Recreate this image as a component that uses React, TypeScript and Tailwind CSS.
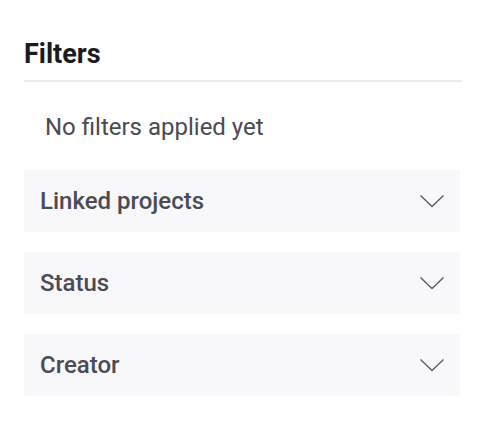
const sections = ['Linked projects', 'Status', 'Creator']

function FilterSection({ label }: { label: string }) {
  return (
    <div className="flex h-[62px] items-center justify-between bg-[#f8f8fa] px-4">
      <span className="text-[24px] font-medium leading-[28px] text-[#4b4b55]">{label}</span>
      <svg width="24" height="14" viewBox="0 0 24 14" fill="none">
        <path d="M0.5 1.5 L12 12.5 L23.5 1.5" stroke="#5b5b63" strokeWidth="1.4" />
      </svg>
    </div>
  )
}

export default function App() {
  return (
    <div className="min-h-screen bg-white px-6 pt-[38px]" style={{ fontFamily: 'Roboto, "Noto Sans", sans-serif' }}>
      <div className="w-[438px]">
        <h2 className="pb-[10px] text-[27px] font-bold leading-[32px] text-[#1b1b1f]">Filters</h2>
        <div className="h-[2px] bg-[#ececf0]" />
        <p className="pl-[21px] pt-[31px] pb-[29px] text-[24px] leading-[28px] text-[#4a4a52]">No filters applied yet</p>
        <div className="flex w-[436px] flex-col gap-5">
          {sections.map((s) => (
            <FilterSection key={s} label={s} />
          ))}
        </div>
      </div>
    </div>
  )
}
